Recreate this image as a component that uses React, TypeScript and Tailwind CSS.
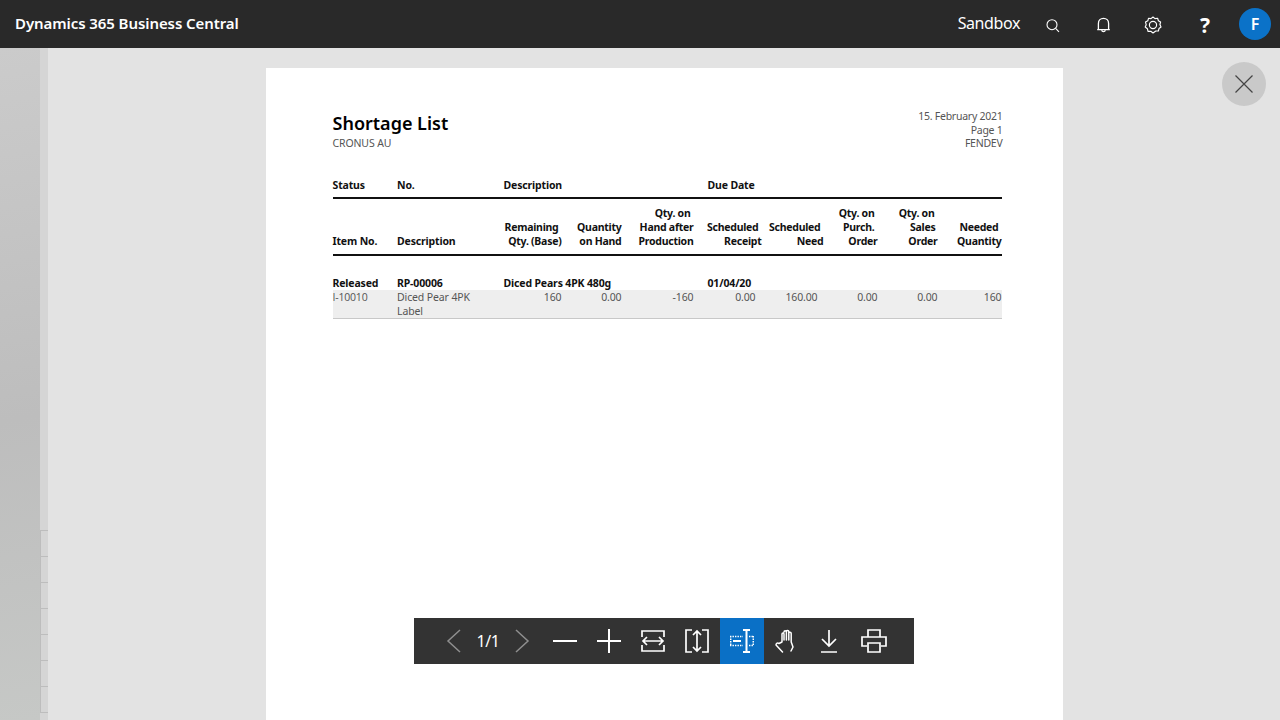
import React from "react";

function HeaderLine({ children, pr = 0 }: { children: React.ReactNode; pr?: number }) {
  return <div style={{ paddingRight: pr }}>{children}</div>;
}

const cols = "grid grid-cols-[64.5px_106.5px_58px_60px_72px_68px_62px_54px_60px_64px]";

function Dark({ d, w = 24, sw = 2 }: { d: string; w?: number; sw?: number }) {
  return (
    <svg width={w} height={w} viewBox="0 0 24 24" fill="none" stroke="currentColor" strokeWidth={sw}>
      <path d={d} />
    </svg>
  );
}

function ToolBtn({ children, active }: { children: React.ReactNode; active?: boolean }) {
  return (
    <div className={`w-11 h-full flex items-center justify-center ${active ? "bg-[#0a70c6]" : ""}`}>{children}</div>
  );
}

export default function App() {
  return (
    <div className="w-[1280px] h-[720px] overflow-hidden flex flex-col bg-[#e3e3e3] font-['Noto_Sans',sans-serif]">
      <header className="h-12 shrink-0 bg-[#292929] text-white flex items-center">
        <div className="ml-[15px] text-[15px] font-semibold tracking-[-0.08px] -mt-[2px]">Dynamics 365 Business Central</div>
        <div className="ml-auto text-[16px] -mt-[2px] tracking-[-0.4px]">Sandbox</div>
        <div className="ml-[24px] w-4 h-4 mt-[2px] flex items-center justify-center">
          <svg width="15" height="15" viewBox="0 0 15 15" fill="none" stroke="currentColor" strokeWidth="1.1">
            <circle cx="7" cy="6.7" r="5" />
            <path d="M10.6 10.3 L14 13.8" />
          </svg>
        </div>
        <div className="ml-[35px] w-4 h-4 mt-[2px] flex items-center justify-center">
          <svg width="15" height="16" viewBox="0 0 15 16" fill="none" stroke="currentColor" strokeWidth="1.3">
            <path d="M2.4 12.6 V6.5 C2.4 3.4 4.6 1.4 7.5 1.4 C10.4 1.4 12.6 3.4 12.6 6.5 V12.6 Z M1.2 12.6 H13.8" />
            <path d="M5.7 13.2 C6 15.2 9 15.2 9.3 13.2" />
          </svg>
        </div>
        <div className="ml-[33px] w-[18px] h-[18px] mt-[2px] flex items-center justify-center">
          <svg width="18" height="18" viewBox="0 0 18 18" fill="none" stroke="currentColor" strokeWidth="1.15">
            <path d="M9 1 L11 2.6 L13.6 2.3 L14.4 4.7 L16.6 6 L15.9 8.5 L17 11 L15 12.5 L14.4 15 L11.8 15 L9 17 L6.8 15.3 L4 15.3 L3.4 12.7 L1.2 11 L2.2 8.7 L1.5 6.1 L3.8 4.8 L4.5 2.3 L7 2.6 Z" strokeLinejoin="round" />
            <circle cx="9" cy="9" r="3.6" />
          </svg>
        </div>
        <div className="ml-[38px] w-[10px] flex justify-center text-[21px] font-bold leading-none mt-[3px]">?</div>
        <div className="ml-[29px] mr-[9px] w-8 h-8 rounded-full bg-[#0b72c8] flex items-center justify-center text-[16px] font-semibold">F</div>
      </header>

      <div className="flex-1 flex min-h-0">
        <div className="w-10 bg-[linear-gradient(170deg,#cbcbcb_0%,#bdbdbd_55%,#c6c8c6_100%)]" />
        <div className="w-2 bg-[#d5d5d5] flex flex-col">
          <div className="h-[483px] shrink-0 border-b border-[#bdbdbd]" />
          {[0, 1, 2, 3, 4, 5, 6].map((i) => (
            <div key={i} className="h-[26px] shrink-0 border-b border-l border-[#bdbdbd]" />
          ))}
        </div>

        <main className="relative flex-1 min-w-0 pt-5">
          <div className="w-[797px] h-[700px] mx-auto bg-white pl-[67px] pr-[61px] text-[10.5px] leading-[14px] text-[#555] tracking-[-0.12px]">
            <div className="flex justify-between pt-[42px] h-[110px]">
              <div>
                <h1 className="text-[18px] leading-[26px] font-semibold text-black tracking-normal">Shortage List</h1>
                <div>CRONUS AU</div>
              </div>
              <div className="text-right leading-[13.5px] tracking-[-0.25px] -mr-px">
                <div>15. February 2021</div>
                <div>Page 1</div>
                <div>FENDEV</div>
              </div>
            </div>

            <div className="font-bold text-[#111] tracking-[-0.15px]">
              <div className={`${cols} h-[21px] border-b-2 border-[#111]`}>
                <div>Status</div>
                <div>No.</div>
                <div className="col-span-3">Description</div>
                <div className="col-span-5 pl-[14px]">Due Date</div>
              </div>
              <div className={`${cols} h-[57px] pt-[7px] border-b-2 border-[#111] items-end pb-[6px] text-right tracking-[-0.25px]`}>
                <div className="text-left tracking-[-0.15px]">Item No.</div>
                <div className="text-left tracking-[-0.15px]">Description</div>
                <div><HeaderLine pr={3}>Remaining</HeaderLine><HeaderLine>Qty. (Base)</HeaderLine></div>
                <div><HeaderLine>Quantity</HeaderLine><HeaderLine>on Hand</HeaderLine></div>
                <div><HeaderLine pr={3}>Qty. on</HeaderLine><HeaderLine>Hand after</HeaderLine><HeaderLine>Production</HeaderLine></div>
                <div className="whitespace-nowrap"><HeaderLine pr={3}>Scheduled</HeaderLine><HeaderLine>Receipt</HeaderLine></div>
                <div className="whitespace-nowrap"><HeaderLine pr={3}>Scheduled</HeaderLine><HeaderLine>Need</HeaderLine></div>
                <div className="whitespace-nowrap"><HeaderLine pr={3}>Qty. on</HeaderLine><HeaderLine pr={3}>Purch.</HeaderLine><HeaderLine>Order</HeaderLine></div>
                <div className="whitespace-nowrap"><HeaderLine pr={3}>Qty. on</HeaderLine><HeaderLine pr={2}>Sales</HeaderLine><HeaderLine>Order</HeaderLine></div>
                <div className="whitespace-nowrap"><HeaderLine pr={3}>Needed</HeaderLine><HeaderLine>Quantity</HeaderLine></div>
              </div>
              <div className={`${cols} h-[14px] mt-[20px]`}>
                <div>Released</div>
                <div>RP-00006</div>
                <div className="col-span-3 whitespace-nowrap">Diced Pears 4PK 480g</div>
                <div className="col-span-5 pl-[14px]">01/04/20</div>
              </div>
            </div>
            <div className={`${cols} h-[29px] bg-[#eeeeee] border-b border-[#c8c8c8] text-right`}>
              <div className="text-left font-['Open_Sans',sans-serif] tracking-[-0.2px]">I-10010</div>
              <div className="text-left pr-6">Diced Pear 4PK Label</div>
              <div>160</div>
              <div>0.00</div>
              <div>-160</div>
              <div className="pr-[6px]">0.00</div>
              <div className="pr-[6px]">160.00</div>
              <div>0.00</div>
              <div>0.00</div>
              <div>160</div>
            </div>
          </div>

          <div className="absolute left-[1174px] top-[14px] w-11 h-11 rounded-full bg-[#c9c9c9] flex items-center justify-center text-[#444]">
            <svg width="20" height="20" viewBox="0 0 20 20" fill="none" stroke="currentColor" strokeWidth="1.2">
              <path d="M1.5 1.5 L18.5 18.5 M18.5 1.5 L1.5 18.5" />
            </svg>
          </div>

          <div className="absolute left-[366px] top-[570px] w-[500px] h-[46px] bg-[#333333] text-white flex items-center pl-[18px]">
            <ToolBtn>
              <svg width="16" height="24" viewBox="0 0 16 24" fill="none" stroke="#8f8f8f" strokeWidth="1.5"><path d="M14 1 L2 12 L14 23" /></svg>
            </ToolBtn>
            <div className="w-6 flex justify-center text-[16px] whitespace-nowrap tracking-[-0.4px]"><span>1/1</span></div>
            <ToolBtn>
              <svg width="16" height="24" viewBox="0 0 16 24" fill="none" stroke="#8f8f8f" strokeWidth="1.5"><path d="M2 1 L14 12 L2 23" /></svg>
            </ToolBtn>
            <ToolBtn><div className="-ml-[2px] flex"><Dark d="M0 12 H24" w={24} sw={2} /></div></ToolBtn>
            <ToolBtn><div className="-ml-[2px] flex"><Dark d="M0 12 H24 M12 0 V24" w={24} sw={2} /></div></ToolBtn>
            <ToolBtn>
              <div className="-ml-[2px] flex">
                <svg width="24" height="24" viewBox="0 0 24 24" fill="none" stroke="currentColor" strokeWidth="1.7">
                  <path d="M1 8 V2 H23 V8 M1 16 V22 H23 V16 M2 12 H22 M6 8 L2 12 L6 16 M18 8 L22 12 L18 16" />
                </svg>
              </div>
            </ToolBtn>
            <ToolBtn>
              <div className="-ml-[2px] flex">
                <svg width="24" height="24" viewBox="0 0 24 24" fill="none" stroke="currentColor" strokeWidth="1.7">
                  <path d="M7 1 H1 V23 H7 M17 1 H23 V23 H17 M12 2 V22 M8 6 L12 2 L16 6 M8 18 L12 22 L16 18" />
                </svg>
              </div>
            </ToolBtn>
            <ToolBtn active>
              <svg width="24" height="24" viewBox="0 0 24 24" fill="none" stroke="currentColor" strokeWidth="1.5">
                <path d="M0 7.5 H13 M0 16.5 H13 M0.7 7 V17 M19 7.5 H24 M19 16.5 H24 M23.3 7 V17" strokeDasharray="1.4 1.1" />
                <path d="M3 12 H11" strokeWidth="2" />
                <path d="M13 1 H20 M13 23 H20 M16.5 1 V23" strokeWidth="2" />
              </svg>
            </ToolBtn>
            <ToolBtn>
              <svg width="24" height="24" viewBox="0 0 24 24" fill="none" stroke="currentColor" strokeWidth="1.5" strokeLinejoin="round" strokeLinecap="round">
                <path d="M8 13 V5 C8 3.6 10 3.6 10 5 V11 M10 3 C10 1.4 12.4 1.4 12.4 3 V11 M12.4 2.5 C12.4 1 14.8 1 14.8 2.8 V11 M14.8 4 C14.8 2.8 17.2 2.8 17.2 4.4 V13 L19 18 L17 22 M2 16 C2 14.5 3 13.5 5 14.5 L8 13 M2 16 L8.5 23" />
              </svg>
            </ToolBtn>
            <ToolBtn>
              <div className="-ml-[2px] flex">
                <svg width="24" height="24" viewBox="0 0 24 24" fill="none" stroke="currentColor" strokeWidth="1.7">
                  <path d="M12 1 V17 M5 10 L12 17 L19 10 M4 23 H20" />
                </svg>
              </div>
            </ToolBtn>
            <ToolBtn>
              <svg width="26" height="24" viewBox="0 0 26 24" fill="none" stroke="currentColor" strokeWidth="1.7">
                <path d="M7 8 V1 H19 V8 M6 17 H1 V8 H25 V17 H20 M7 14 H19 V23 H7 Z" />
              </svg>
            </ToolBtn>
          </div>
        </main>
      </div>
    </div>
  );
}
